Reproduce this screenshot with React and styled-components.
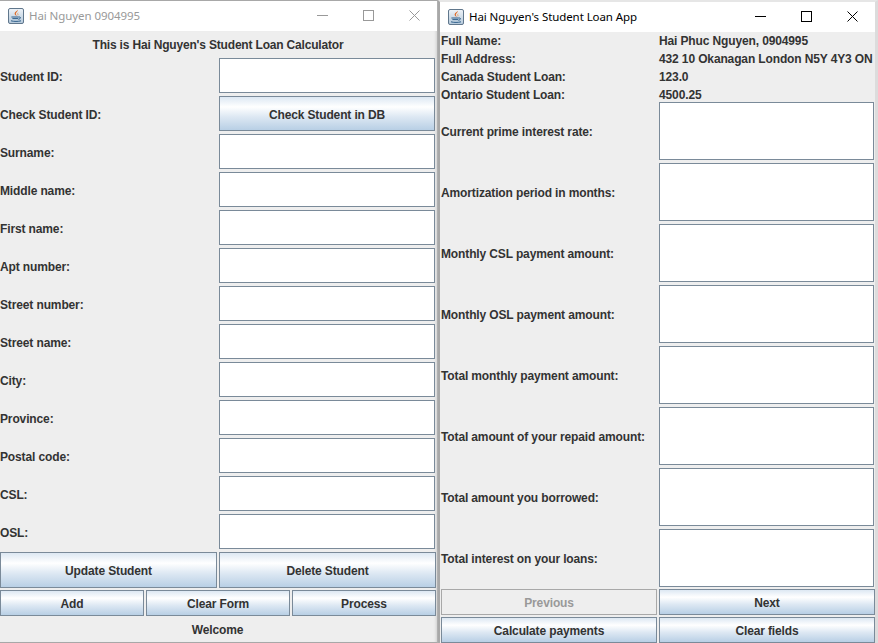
import React from "react";
import styled, { createGlobalStyle } from "styled-components";

const GlobalStyle = createGlobalStyle`
  html, body {
    margin: 0;
    padding: 0;
    background: #eeeeee;
  }
  * {
    box-sizing: border-box;
  }
`;

const Desktop = styled.div`
  width: 878px;
  height: 643px;
  display: flex;
  overflow: hidden;
  background: #eeeeee;
  font-family: "Liberation Sans", Arial, sans-serif;
  font-size: 12px;
  font-weight: bold;
  letter-spacing: -0.13px;
  color: #333333;
`;

const Window = styled.div`
  flex: none;
  width: ${(p) => p.$width}px;
  height: 643px;
  display: flex;
  flex-direction: column;
  background: #eeeeee;
  border-style: solid;
  border-color: ${(p) => p.$edge};
  border-width: ${(p) => p.$borders};
`;

const TitleBar = styled.div`
  flex: none;
  height: 30px;
  display: flex;
  align-items: center;
  padding-left: 8px;
  padding-bottom: 1px;
  background: #ffffff;
`;

const AppIcon = styled.svg`
  flex: none;
  width: 16px;
  height: 16px;
  margin-right: 5px;
`;

const TitleText = styled.span`
  flex: 1;
  font-family: "Noto Sans", "Open Sans", sans-serif;
  font-size: 11.5px;
  font-weight: normal;
  letter-spacing: -0.08px;
  color: ${(p) => (p.$active ? "#000000" : "#999999")};
`;

const CaptionButton = styled.div`
  flex: none;
  width: 46px;
  height: 29px;
  display: flex;
  align-items: center;
  justify-content: center;
  color: ${(p) => (p.$active ? "#000000" : "#999999")};
`;

const FormPanel = styled.div`
  flex: 1;
  display: flex;
  flex-direction: column;
  box-shadow: ${(p) => (p.$shade ? "inset -3px 0 3px -2px #d0d0d0" : "none")};
`;

const Heading = styled.div`
  flex: none;
  height: 27px;
  line-height: 27px;
  padding-top: 1px;
  padding-right: 1px;
  text-align: center;
  letter-spacing: -0.18px;
`;

const LeftRows = styled.div`
  display: grid;
  grid-template-columns: 217px 216px;
  grid-auto-rows: 35px;
  column-gap: 2px;
  row-gap: 3px;
`;

const Label = styled.div`
  display: flex;
  align-items: center;
  white-space: nowrap;
  padding-top: 2px;
`;

const Field = styled.div`
  background: #ffffff;
  border: 1px solid #7a8a99;
`;

const MetalButton = styled.div`
  display: flex;
  align-items: center;
  justify-content: center;
  padding-top: 2px;
  white-space: nowrap;
  border: 1px solid #7a8a99;
  background: linear-gradient(
    to bottom,
    #dde8f3 0%,
    #ffffff 30%,
    #dde8f3 60%,
    #b8cfe5 100%
  );
  ${(p) =>
    p.$disabled &&
    `
    border-color: #a8a8a8;
    background: #eeeeee;
    color: #999999;
  `}
`;

const ButtonRow = styled.div`
  flex: none;
  display: grid;
  grid-template-columns: ${(p) => p.$columns};
  height: ${(p) => p.$height}px;
  column-gap: 2px;
  margin-top: ${(p) => p.$top}px;
  padding-left: ${(p) => p.$inset || 0}px;
`;

const StatusLine = styled.div`
  flex: none;
  height: 25px;
  line-height: 25px;
  padding-top: 2px;
  padding-right: 2px;
  text-align: center;
`;

const InfoRows = styled.div`
  display: grid;
  grid-template-columns: 218px 1fr;
  grid-auto-rows: 18px;
  padding-left: 1px;
`;

const InfoCell = styled.div`
  line-height: 18px;
  white-space: nowrap;
`;

const ResultRows = styled.div`
  display: grid;
  grid-template-columns: 218px 215px;
  grid-auto-rows: 58px;
  row-gap: 3px;
  padding-left: 1px;
  margin-top: -2px;
`;

const JavaIcon = ({ id }) => (
  <AppIcon viewBox="0 0 16 16">
    <defs>
      <linearGradient id={id} x1="0" y1="0" x2="0" y2="1">
        <stop offset="0" stopColor="#eef3f8" />
        <stop offset="1" stopColor="#b4c8da" />
      </linearGradient>
    </defs>
    <rect x="0.5" y="0.5" width="15" height="15" rx="1.5" fill={`url(#${id})`} stroke="#60778c" />
    <path d="M9.6 1.8c.9 1.7-2.6 2.9-1.5 5 .2.4.5.7.7 1.1-1.3-.6-2.6-1.5-2.1-3C7.2 3.4 9.6 3.2 9.6 1.8z" fill="#e0661f" />
    <path d="M11.2 4.2c-1.2.5-2 1.1-1.7 2 .2.5.5.8.2 1.5.9-.6.8-1.2.4-1.9-.3-.6.2-1 1.1-1.6z" fill="#ea8a3a" />
    <path d="M3.4 9h7.4M4.4 10.6h5.6M3 12.8c2.6.8 7.4.8 10 0M10.8 9c2.4-.4 2.4 1.9-.6 2.2" fill="none" stroke="#2f5f8a" strokeWidth="1" />
  </AppIcon>
);

const Caption = ({ active }) => (
  <>
    <CaptionButton $active={active}>
      <svg width="11" height="11" viewBox="0 0 11 11">
        <path d="M0 5.5h11" stroke="currentColor" fill="none" />
      </svg>
    </CaptionButton>
    <CaptionButton $active={active}>
      <svg width="11" height="11" viewBox="0 0 11 11">
        <rect x="0.5" y="0.5" width="10" height="10" stroke="currentColor" fill="none" />
      </svg>
    </CaptionButton>
    <CaptionButton $active={active}>
      <svg width="11" height="11" viewBox="0 0 11 11">
        <path d="M0.5 0.5l10 10M10.5 0.5l-10 10" stroke="currentColor" fill="none" />
      </svg>
    </CaptionButton>
  </>
);

const studentFields = [
  "Surname:",
  "Middle name:",
  "First name:",
  "Apt number:",
  "Street number:",
  "Street name:",
  "City:",
  "Province:",
  "Postal code:",
  "CSL:",
  "OSL:",
];

const info = [
  ["Full Name:", "Hai Phuc Nguyen, 0904995"],
  ["Full Address:", "432 10 Okanagan London N5Y 4Y3 ON"],
  ["Canada Student Loan:", "123.0"],
  ["Ontario Student Loan:", "4500.25"],
];

const results = [
  "Current prime interest rate:",
  "Amortization period in months:",
  "Monthly CSL payment amount:",
  "Monthly OSL payment amount:",
  "Total monthly payment amount:",
  "Total amount of your repaid amount:",
  "Total amount you borrowed:",
  "Total interest on your loans:",
];

export default function App() {
  return (
    <Desktop>
      <GlobalStyle />
      <Window $width={438} $edge="#a8a8a8 #b0b0b0 #a8a8a8" $borders="1px 1px 1px 0">
        <TitleBar>
          <JavaIcon id="tile-left" />
          <TitleText>Hai Nguyen 0904995</TitleText>
          <Caption />
        </TitleBar>
        <FormPanel $shade>
          <Heading>This is Hai Nguyen's Student Loan Calculator</Heading>
          <LeftRows>
            <Label>Student ID:</Label>
            <Field />
            <Label>Check Student ID:</Label>
            <MetalButton>Check Student in DB</MetalButton>
            {studentFields.map((name) => (
              <React.Fragment key={name}>
                <Label>{name}</Label>
                <Field />
              </React.Fragment>
            ))}
          </LeftRows>
          <ButtonRow $columns="217px 217px" $height={36} $top={3}>
            <MetalButton>Update Student</MetalButton>
            <MetalButton>Delete Student</MetalButton>
          </ButtonRow>
          <ButtonRow $columns="144px 144px 144px" $height={26} $top={2}>
            <MetalButton>Add</MetalButton>
            <MetalButton>Clear Form</MetalButton>
            <MetalButton>Process</MetalButton>
          </ButtonRow>
          <StatusLine>Welcome</StatusLine>
        </FormPanel>
      </Window>
      <Window $width={440} $edge="#e6e6e6 #dcdcdc #eeeeee #a8a8a8" $borders="2px 3px 0 2px">
        <TitleBar>
          <JavaIcon id="tile-right" />
          <TitleText $active>Hai Nguyen's Student Loan App</TitleText>
          <Caption active />
        </TitleBar>
        <FormPanel>
          <InfoRows>
            {info.map(([name, value]) => (
              <React.Fragment key={name}>
                <InfoCell>{name}</InfoCell>
                <InfoCell>{value}</InfoCell>
              </React.Fragment>
            ))}
          </InfoRows>
          <ResultRows>
            {results.map((name) => (
              <React.Fragment key={name}>
                <Label>{name}</Label>
                <Field />
              </React.Fragment>
            ))}
          </ResultRows>
          <ButtonRow $columns="216px 216px" $height={26} $top={2} $inset={1}>
            <MetalButton $disabled>Previous</MetalButton>
            <MetalButton>Next</MetalButton>
          </ButtonRow>
          <ButtonRow $columns="216px 216px" $height={26} $top={2} $inset={1}>
            <MetalButton>Calculate payments</MetalButton>
            <MetalButton>Clear fields</MetalButton>
          </ButtonRow>
        </FormPanel>
      </Window>
    </Desktop>
  );
}
